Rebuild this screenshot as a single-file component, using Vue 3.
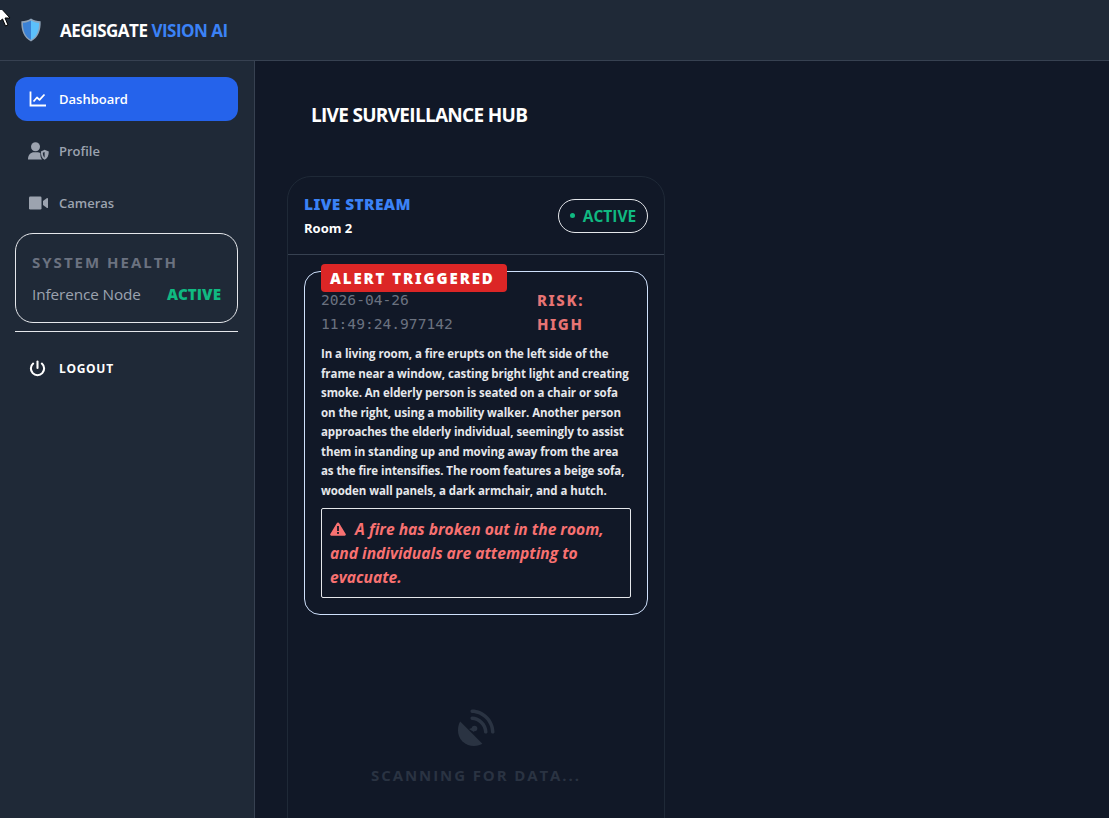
<template>
  <div class="app">
    <header class="topbar">
      <svg class="logo" viewBox="0 0 24 28" width="22" height="26">
        <path d="M12 1.5 C15 3.5 18.5 4.5 22.5 4.5 C23 14 20 22.5 12 26.5 C4 22.5 1 14 1.5 4.5 C5.5 4.5 9 3.5 12 1.5 Z" fill="#8fa3b8" />
        <path d="M12 3.5 C9 5 6 6 3.2 6.1 C3 14 5.5 21.5 12 24.7 Z" fill="#3b82d6" />
        <path d="M12 3.5 C15 5 18 6 20.8 6.1 C21 14 18.5 21.5 12 24.7 Z" fill="#5cc0fb" />
      </svg>
      <h1 class="brand">AEGISGATE <span>VISION AI</span></h1>
    </header>

    <div class="body">
      <aside class="sidebar">
        <nav class="nav">
          <a v-for="item in navItems" :key="item.label" class="nav-item" :class="{ active: item.active }">
            <svg v-if="item.icon === 'chart'" class="nav-icon" viewBox="0 0 18 18" width="18" height="18" fill="none" stroke="currentColor" stroke-width="1.8">
              <path d="M1.5 1.5 V15.5 H17" />
              <path d="M4.5 11.5 L8 7.5 L10.5 9.8 L15.5 4.5" stroke-linejoin="round" />
            </svg>
            <svg v-else-if="item.icon === 'user'" class="nav-icon" viewBox="0 0 21 18" width="21" height="18" fill="currentColor">
              <circle cx="7.5" cy="4.8" r="4.5" />
              <path d="M0 17.5 C0 12.5 3 10.2 6 10.2 H9 C10.5 10.2 11.5 10.6 12.4 11.2 V13 C12.4 14.8 13 16.3 14 17.5 Z" />
              <path d="M16.6 7.8 L20.8 9.5 C20.8 13.5 19.4 16.5 16.6 17.7 C13.8 16.5 12.9 13.5 12.9 9.5 Z M16.6 10 L14.8 10.8 C14.9 13 15.5 14.8 16.6 15.7 Z" fill-rule="evenodd" />
            </svg>
            <svg v-else class="nav-icon" viewBox="0 0 19 14" width="19" height="14" fill="currentColor">
              <rect x="0" y="0.5" width="12.5" height="13" rx="1.2" />
              <path d="M14 5 L18 2 C18.5 1.7 19 2 19 2.6 V11.4 C19 12 18.5 12.3 18 12 L14 9 Z" />
            </svg>
            <span>{{ item.label }}</span>
          </a>
        </nav>

        <section class="health">
          <h3>SYSTEM HEALTH</h3>
          <div class="health-row">
            <span>Inference Node</span>
            <strong>ACTIVE</strong>
          </div>
        </section>

        <a class="logout">
          <svg viewBox="0 0 18 18" width="17" height="17" fill="none" stroke="#fff" stroke-width="2.2" stroke-linecap="round">
            <path d="M9 1.5 V8.5" />
            <path d="M13.6 3.8 A7 7 0 1 1 4.4 3.8" />
          </svg>
          <span>LOGOUT</span>
        </a>
      </aside>

      <main class="main">
        <h2 class="page-title">LIVE SURVEILLANCE HUB</h2>

        <section class="stream-card">
          <div class="stream-head">
            <div class="stream-info">
              <div class="stream-label">LIVE STREAM</div>
              <div class="stream-room">Room 2</div>
            </div>
            <div class="status-pill"><i></i>ACTIVE</div>
          </div>

          <div class="stream-body">
            <article class="alert-card">
              <div class="alert-badge">ALERT TRIGGERED</div>
              <div class="alert-meta">
                <div class="alert-time">2026-04-26 11:49:24.977142</div>
                <div class="alert-risk">RISK: HIGH</div>
              </div>
              <p class="alert-text">{{ description }}</p>
              <div class="alert-summary">
                <svg viewBox="0 0 16 14" width="16" height="14">
                  <path d="M8 0.5 C8.5 0.5 9 0.8 9.2 1.2 L15.7 12 C16.1 12.8 15.6 13.7 14.7 13.7 H1.3 C0.4 13.7 -0.1 12.8 0.3 12 L6.8 1.2 C7 0.8 7.5 0.5 8 0.5 Z" fill="#f87171" />
                  <rect x="7.1" y="4" width="1.8" height="5" fill="#111827" />
                  <rect x="7.1" y="10" width="1.8" height="1.9" fill="#111827" />
                </svg>
                A fire has broken out in the room, and individuals are attempting to evacuate.
              </div>
            </article>

            <div class="scanning">
              <svg viewBox="0 0 38 38" width="38" height="38" fill="#2a3342">
                <path d="M3.2 12.6 L25.4 34.8 C21.8 37.2 12 39 5.5 32.5 C-1 26 0.8 16.2 3.2 12.6 Z" />
                <circle cx="17.5" cy="19.5" r="2.8" />
                <path d="M12 20 L18 18 L17 23 Z" />
                <path d="M15 0.5 C27 0.5 37.5 11 37.5 23 C37.5 25 34 25 34 23 C34 13 25 4 15 4 C13 4 13 0.5 15 0.5 Z" />
                <path d="M15 7.5 C23 7.5 30.5 15 30.5 23 C30.5 25 27 25 27 23 C27 17 21 11 15 11 C13 11 13 7.5 15 7.5 Z" />
              </svg>
              <div>SCANNING FOR DATA...</div>
            </div>
          </div>
        </section>
      </main>
    </div>

    <svg class="cursor" viewBox="0 0 12 20" width="12" height="20">
      <path d="M-1 12 L-1 -4 L10 8 L5 8 L8 15 L5.5 16 L2.5 9 Z" fill="#fff" stroke="#000" stroke-width="1" />
    </svg>
  </div>
</template>

<script setup>
const navItems = [
  { label: 'Dashboard', icon: 'chart', active: true },
  { label: 'Profile', icon: 'user' },
  { label: 'Cameras', icon: 'video' }
]

const description = 'In a living room, a fire erupts on the left side of the frame near a window, casting bright light and creating smoke. An elderly person is seated on a chair or sofa on the right, using a mobility walker. Another person approaches the elderly individual, seemingly to assist them in standing up and moving away from the area as the fire intensifies. The room features a beige sofa, wooden wall panels, a dark armchair, and a hutch.'
</script>

<style>
html, body {
  margin: 0;
  height: 100%;
  overflow: hidden;
  background: #111827;
}
</style>

<style scoped>
.app {
  position: relative;
  height: 818px;
  overflow: hidden;
  display: flex;
  flex-direction: column;
  background: #111827;
  color: #fff;
  font-family: "Open Sans", "Noto Sans", sans-serif;
}

.topbar {
  flex: none;
  height: 60px;
  display: flex;
  align-items: center;
  gap: 18px;
  padding-left: 20px;
  background: #1f2937;
  border-bottom: 1px solid #374151;
}

.brand {
  margin: 0;
  font-size: 17px;
  font-weight: 700;
  letter-spacing: -0.5px;
  color: #fff;
}

.brand span {
  color: #3b82f6;
}

.body {
  flex: 1;
  display: flex;
  min-height: 0;
}

.sidebar {
  flex: none;
  width: 255px;
  box-sizing: border-box;
  padding: 16px 16px 0 15px;
  background: #1f2937;
  border-right: 1px solid #374151;
}

.nav {
  display: flex;
  flex-direction: column;
  gap: 8px;
}

.nav-item {
  height: 44px;
  display: grid;
  grid-template-columns: 20px 1fr;
  column-gap: 11px;
  align-items: center;
  padding-left: 13px;
  border-radius: 12px;
  font-size: 13px;
  font-weight: 600;
  color: #9ca3af;
}

.nav-item.active {
  background: #2563eb;
  color: #fff;
}

.nav-icon {
  justify-self: center;
}

.health {
  margin-top: 8px;
  height: 90px;
  box-sizing: border-box;
  padding: 18px 16px 0;
  border: 1px solid #e5e7eb;
  border-radius: 18px;
}

.health h3 {
  margin: 0;
  font-size: 15px;
  line-height: 20px;
  font-weight: 700;
  letter-spacing: 2px;
  color: #6b7280;
}

.health-row {
  margin-top: 12px;
  display: flex;
  justify-content: space-between;
  align-items: center;
  font-size: 15.3px;
  line-height: 20px;
  letter-spacing: -0.1px;
  color: #9ca3af;
}

.health-row strong {
  font-size: 15.2px;
  font-weight: 800;
  letter-spacing: 0;
  color: #10b981;
}

.logout {
  margin-top: 8px;
  height: 74px;
  box-sizing: border-box;
  padding-left: 14px;
  display: flex;
  align-items: center;
  gap: 13px;
  border-top: 1px solid #e5e7eb;
  font-size: 12px;
  font-weight: 700;
  letter-spacing: 0.7px;
  color: #fff;
}

.main {
  flex: 1;
  min-width: 0;
  padding: 41px 0 0 32px;
}

.page-title {
  margin: 0 0 48px 24px;
  font-size: 19px;
  line-height: 26px;
  font-weight: 700;
  letter-spacing: -0.7px;
  color: #fff;
}

.stream-card {
  width: 378px;
  height: 700px;
  box-sizing: border-box;
  border: 1px solid #1f2937;
  border-radius: 24px;
}

.stream-head {
  height: 78px;
  box-sizing: border-box;
  padding: 0 16px;
  display: flex;
  align-items: center;
  justify-content: space-between;
  border-bottom: 1px solid #374151;
}

.stream-info {
  padding-top: 2px;
}

.stream-label {
  font-family: "Noto Sans", sans-serif;
  font-size: 15.5px;
  line-height: 22px;
  font-weight: 900;
  letter-spacing: 0.4px;
  color: #3b82f6;
}

.stream-room {
  margin-top: 1px;
  font-size: 13px;
  line-height: 24px;
  font-weight: 700;
  color: #fff;
}

.status-pill {
  height: 34px;
  width: 90px;
  box-sizing: border-box;
  display: flex;
  align-items: center;
  justify-content: center;
  gap: 8px;
  border: 1px solid #e5e7eb;
  border-radius: 17px;
  font-size: 15.5px;
  font-weight: 700;
  color: #10b981;
}

.status-pill i {
  width: 5px;
  height: 5px;
  border-radius: 50%;
  background: #10b981;
}

.stream-body {
  padding: 16px;
}

.alert-card {
  position: relative;
  width: 344px;
  height: 344px;
  box-sizing: border-box;
  padding: 16px 16px 0;
  border: 1px solid #cfe0fb;
  border-radius: 16px;
}

.alert-badge {
  position: absolute;
  left: 16px;
  top: -8px;
  width: 186px;
  height: 28px;
  box-sizing: border-box;
  padding-left: 9px;
  background: #dc2626;
  border-radius: 4px;
  font-family: "Noto Sans", sans-serif;
  font-size: 15px;
  line-height: 28px;
  font-weight: 900;
  letter-spacing: 1.9px;
  white-space: nowrap;
  color: #fff;
}

.alert-meta {
  display: flex;
  justify-content: space-between;
}

.alert-time {
  width: 150px;
  font-family: "DejaVu Sans Mono", monospace;
  font-size: 14.6px;
  line-height: 24px;
  color: #6b7280;
}

.alert-risk {
  width: 94px;
  font-family: "Noto Sans", sans-serif;
  font-size: 15px;
  line-height: 24px;
  font-weight: 800;
  letter-spacing: 1.6px;
  color: #e87474;
}

.alert-text {
  margin: 8px 0 0;
  font-size: 11.5px;
  line-height: 19.5px;
  font-weight: 700;
  letter-spacing: -0.08px;
  color: #e5e7eb;
}

.alert-summary {
  margin-top: 8px;
  width: 310px;
  height: 90px;
  box-sizing: border-box;
  padding: 8px;
  border: 1px solid #e5e7eb;
  border-radius: 2px;
  font-size: 15.6px;
  line-height: 24px;
  font-weight: 700;
  font-style: italic;
  color: #f87171;
}

.alert-summary svg {
  margin-right: 5px;
  vertical-align: -1px;
}

.scanning {
  margin-top: 94px;
  display: flex;
  flex-direction: column;
  align-items: center;
  gap: 18px;
  font-size: 15px;
  font-weight: 700;
  letter-spacing: 1.9px;
  color: #2a3342;
}

.cursor {
  position: absolute;
  left: 0;
  top: 10px;
}
</style>
